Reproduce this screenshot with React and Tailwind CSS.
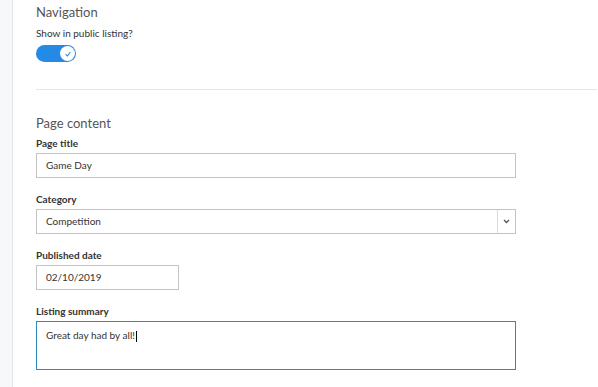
const labelCls = "block text-[10px] font-bold text-[#333] mb-[4px] leading-[12px]";
const boxCls = "border border-[#c4c4c4] bg-white h-[25px] flex items-center px-[9px] text-[10px] text-[#333]";

const App = () => {
  return (
    <div
      className="flex min-h-[387px] w-[598px] bg-white"
      style={{ fontFamily: "Lato, 'Liberation Sans', sans-serif" }}
    >
      {/* Sidebar strip */}
      <div className="w-[13px] bg-[#f7f8fa] border-r border-[#e4e4e4] shrink-0" />

      <div className="flex-1 pl-[23px] pt-[3px]">
        {/* Navigation */}
        <h2 className="text-[13px] text-[#555] leading-[16px] mt-[1px]">Navigation</h2>
        <p className="text-[10px] text-[#333] mt-[7px] leading-[12px]">Show in public listing?</p>
        <div className="mt-[6px] w-[40px] h-[17px] rounded-full bg-[#2589e6] relative">
          <div className="absolute right-[1px] top-[1px] w-[15px] h-[15px] rounded-full bg-white flex items-center justify-center">
            <svg width="8" height="8" viewBox="0 0 10 10">
              <path d="M2 5.5 L4.2 7.5 L8 2.5" fill="none" stroke="#2589e6" strokeWidth="1.4" />
            </svg>
          </div>
        </div>

        <div className="mt-[27px] border-t border-[#e6e6e6] mr-[1px]" />

        {/* Page content */}
        <h2 className="text-[13px] text-[#555] leading-[16px] mt-[25px]">Page content</h2>

        <div className="mt-[6px]">
          <label className={labelCls}>Page title</label>
          <div className={`${boxCls} w-[480px]`}>Game Day</div>
        </div>

        <div className="mt-[15px]">
          <label className={labelCls}>Category</label>
          <div className={`${boxCls} w-[480px] pr-0`}>
            <span className="flex-1">Competition</span>
            <div className="w-[18px] h-full border-l border-[#dcdcdc] flex items-center justify-center">
              <svg width="7" height="5" viewBox="0 0 7 5">
                <path d="M1 1 L3.5 3.5 L6 1" fill="none" stroke="#555" strokeWidth="1.3" />
              </svg>
            </div>
          </div>
        </div>

        <div className="mt-[15px]">
          <label className={labelCls}>Published date</label>
          <div className={`${boxCls} w-[143px]`}>02/10/2019</div>
        </div>

        <div className="mt-[15px]">
          <label className={labelCls}>Listing summary</label>
          <div className="border border-[#2b8bbd] w-[480px] h-[49px] px-[9px] pt-[6px] text-[10px] text-[#333]">
            Great day had by all!<span className="inline-block w-px h-[11px] bg-black align-middle ml-px" />
          </div>
        </div>
      </div>
    </div>
  );
};

export default App;
